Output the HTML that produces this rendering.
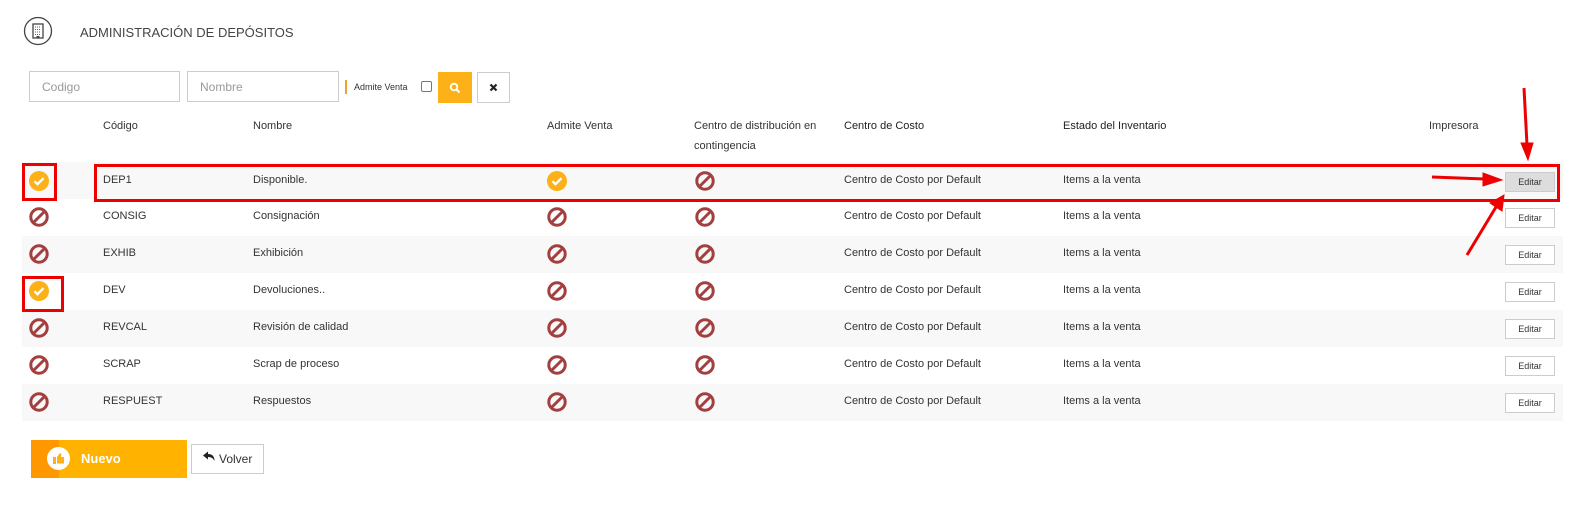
<!DOCTYPE html>
<html><head><meta charset="utf-8"><style>
*{margin:0;padding:0;box-sizing:border-box}
body{width:1593px;height:522px;background:#fff;font-family:"Liberation Sans","Noto Sans CJK JP",sans-serif;color:#333;position:relative;overflow:hidden}
.a{position:absolute}
.t{font-size:11px;color:#333;white-space:nowrap}
.row{position:absolute;left:22px;width:1541px;height:37px}
.g{background:#f8f8f8}
.inp{position:absolute;top:71px;height:31px;border:1px solid #ccc;font-size:12px;color:#999;padding:8px 12px;background:#fff}
.ed{position:absolute;left:1505px;width:50px;height:20px;border:1px solid #ccc;background:#fff;font-size:9px;text-align:center;line-height:18px;color:#333}
.rb{position:absolute;border:3px solid #ee0000}
</style></head><body>
<svg class="a" style="left:23px;top:16px" width="30" height="30" viewBox="0 0 30 30"><circle cx="15" cy="15" r="13.5" fill="none" stroke="#444" stroke-width="1.3"/><rect x="10" y="8" width="10" height="14" fill="none" stroke="#444" stroke-width="1.3"/><path d="M12 11h6M12 13.5h6M12 16h6M12 18.5h6" stroke="#666" stroke-width="1" stroke-dasharray="1 1"/><rect x="13.5" y="20" width="3" height="2" fill="#444"/></svg>
<div class="a" style="left:80px;top:25px;font-size:13px;color:#444">ADMINISTRACIÓN DE DEPÓSITOS</div>

<div class="inp" style="left:29px;width:151px">Codigo</div>
<div class="inp" style="left:187px;width:152px">Nombre</div>
<div class="a" style="left:345px;top:80px;width:2px;height:14px;background:#f0a030"></div>
<div class="a" style="left:354px;top:82px;font-size:9px;color:#333">Admite Venta</div>
<div class="a" style="left:421px;top:81px;width:11px;height:11px;border:1px solid #777;border-radius:2px"></div>
<div class="a" style="left:438px;top:72px;width:34px;height:31px;background:#fbb117"></div>
<svg class="a" style="left:449px;top:82px" width="12" height="12" viewBox="0 0 12 12"><circle cx="5" cy="5" r="3.3" fill="none" stroke="#fff" stroke-width="1.8"/><path d="M7.5 7.5L10.5 10.5" stroke="#fff" stroke-width="2"/></svg>
<div class="a" style="left:477px;top:72px;width:33px;height:31px;border:1px solid #ccc;background:#fff"></div>
<svg class="a" style="left:489px;top:83px" width="9" height="9" viewBox="0 0 9 9"><path d="M1.5 1.5L7.5 7.5M7.5 1.5L1.5 7.5" stroke="#222" stroke-width="2.2"/></svg>

<div class="a t" style="left:103px;top:120px">Código</div>
<div class="a t" style="left:253px;top:120px">Nombre</div>
<div class="a t" style="left:547px;top:120px">Admite Venta</div>
<div class="a t" style="left:694px;top:116px;line-height:20px">Centro de distribución en<br>contingencia</div>
<div class="a t" style="left:844px;top:120px;color:#222">Centro de Costo</div>
<div class="a t" style="left:1063px;top:120px;color:#222">Estado del Inventario</div>
<div class="a t" style="left:1429px;top:120px">Impresora</div>

<div class="row g" style="top:162px"></div>
<div class="row" style="top:199px"></div>
<div class="row g" style="top:236px"></div>
<div class="row" style="top:273px"></div>
<div class="row g" style="top:310px"></div>
<div class="row" style="top:347px"></div>
<div class="row g" style="top:384px"></div>

<svg width="0" height="0" style="position:absolute"><defs>
<symbol id="ok" viewBox="0 0 20 20"><circle cx="10" cy="10" r="10" fill="#fbb117"/><path d="M5.5 10.2l3 3 6-6" fill="none" stroke="#fff" stroke-width="2.4"/></symbol>
<symbol id="no" viewBox="0 0 20 20"><circle cx="10" cy="10" r="8.2" fill="none" stroke="#a3403f" stroke-width="3"/><path d="M4.5 15.5L15.5 4.5" stroke="#a3403f" stroke-width="3"/></symbol>
</defs></svg>

<svg class="a" style="left:29px;top:171px" width="20" height="20"><use href="#ok"/></svg>
<svg class="a" style="left:547px;top:171px" width="20" height="20"><use href="#ok"/></svg>
<svg class="a" style="left:695px;top:171px" width="20" height="20"><use href="#no"/></svg>
<div class="a t" style="left:103px;top:174px">DEP1</div><div class="a t" style="left:253px;top:174px">Disponible.</div>
<div class="a t" style="left:844px;top:174px">Centro de Costo por Default</div><div class="a t" style="left:1063px;top:174px">Items a la venta</div>
<div class="ed" style="top:172px;background:#ddd">Editar</div>

<svg class="a" style="left:29px;top:207px" width="20" height="20"><use href="#no"/></svg>
<svg class="a" style="left:547px;top:207px" width="20" height="20"><use href="#no"/></svg>
<svg class="a" style="left:695px;top:207px" width="20" height="20"><use href="#no"/></svg>
<div class="a t" style="left:103px;top:210px">CONSIG</div><div class="a t" style="left:253px;top:210px">Consignación</div>
<div class="a t" style="left:844px;top:210px">Centro de Costo por Default</div><div class="a t" style="left:1063px;top:210px">Items a la venta</div>
<div class="ed" style="top:208px">Editar</div>

<svg class="a" style="left:29px;top:244px" width="20" height="20"><use href="#no"/></svg>
<svg class="a" style="left:547px;top:244px" width="20" height="20"><use href="#no"/></svg>
<svg class="a" style="left:695px;top:244px" width="20" height="20"><use href="#no"/></svg>
<div class="a t" style="left:103px;top:247px">EXHIB</div><div class="a t" style="left:253px;top:247px">Exhibición</div>
<div class="a t" style="left:844px;top:247px">Centro de Costo por Default</div><div class="a t" style="left:1063px;top:247px">Items a la venta</div>
<div class="ed" style="top:245px">Editar</div>

<svg class="a" style="left:29px;top:281px" width="20" height="20"><use href="#ok"/></svg>
<svg class="a" style="left:547px;top:281px" width="20" height="20"><use href="#no"/></svg>
<svg class="a" style="left:695px;top:281px" width="20" height="20"><use href="#no"/></svg>
<div class="a t" style="left:103px;top:284px">DEV</div><div class="a t" style="left:253px;top:284px">Devoluciones..</div>
<div class="a t" style="left:844px;top:284px">Centro de Costo por Default</div><div class="a t" style="left:1063px;top:284px">Items a la venta</div>
<div class="ed" style="top:282px">Editar</div>

<svg class="a" style="left:29px;top:318px" width="20" height="20"><use href="#no"/></svg>
<svg class="a" style="left:547px;top:318px" width="20" height="20"><use href="#no"/></svg>
<svg class="a" style="left:695px;top:318px" width="20" height="20"><use href="#no"/></svg>
<div class="a t" style="left:103px;top:321px">REVCAL</div><div class="a t" style="left:253px;top:321px">Revisión de calidad</div>
<div class="a t" style="left:844px;top:321px">Centro de Costo por Default</div><div class="a t" style="left:1063px;top:321px">Items a la venta</div>
<div class="ed" style="top:319px">Editar</div>

<svg class="a" style="left:29px;top:355px" width="20" height="20"><use href="#no"/></svg>
<svg class="a" style="left:547px;top:355px" width="20" height="20"><use href="#no"/></svg>
<svg class="a" style="left:695px;top:355px" width="20" height="20"><use href="#no"/></svg>
<div class="a t" style="left:103px;top:358px">SCRAP</div><div class="a t" style="left:253px;top:358px">Scrap de proceso</div>
<div class="a t" style="left:844px;top:358px">Centro de Costo por Default</div><div class="a t" style="left:1063px;top:358px">Items a la venta</div>
<div class="ed" style="top:356px">Editar</div>

<svg class="a" style="left:29px;top:392px" width="20" height="20"><use href="#no"/></svg>
<svg class="a" style="left:547px;top:392px" width="20" height="20"><use href="#no"/></svg>
<svg class="a" style="left:695px;top:392px" width="20" height="20"><use href="#no"/></svg>
<div class="a t" style="left:103px;top:395px">RESPUEST</div><div class="a t" style="left:253px;top:395px">Respuestos</div>
<div class="a t" style="left:844px;top:395px">Centro de Costo por Default</div><div class="a t" style="left:1063px;top:395px">Items a la venta</div>
<div class="ed" style="top:393px">Editar</div>

<div class="rb" style="left:22px;top:163px;width:35px;height:38px"></div>
<div class="rb" style="left:94px;top:164px;width:1466px;height:38px"></div>
<div class="rb" style="left:22px;top:276px;width:42px;height:36px"></div>
<svg class="a" style="left:0;top:0" width="1593" height="522"><g stroke="#ee0000" stroke-width="3" fill="#ee0000">
<path d="M1524 88L1527 145"/><path d="M1521 143L1533 143L1528 160Z" stroke-width="1"/>
<path d="M1432 177L1485 179"/><path d="M1483 173L1502 180L1483 186Z" stroke-width="1"/>
<path d="M1467 255L1496 207"/><path d="M1490 203L1504 195L1502 211Z" stroke-width="1"/>
</g></svg>

<div class="a" style="left:31px;top:440px;width:156px;height:38px;background:#ffb300"></div>
<div class="a" style="left:31px;top:440px;width:28px;height:38px;background:#ff9800"></div>
<div class="a" style="left:47px;top:447px;width:23px;height:23px;border-radius:50%;background:#fff"></div>
<svg class="a" style="left:52px;top:452px" width="13" height="13" viewBox="0 0 13 13"><rect x="1" y="5" width="3" height="7" fill="#fbb117"/><path d="M5 5L8 1C9.5 1 9.5 3 9 5H12V11.5H5Z" fill="#fbb117"/></svg>
<div class="a" style="left:81px;top:451px;font-size:13px;font-weight:bold;color:#fff">Nuevo</div>
<div class="a" style="left:191px;top:444px;width:73px;height:30px;border:1px solid #ccc;background:#fff;font-size:12px;color:#333;padding:7px 0 0 27px">Volver</div>
<svg class="a" style="left:203px;top:451px" width="12" height="11" viewBox="0 0 12 11"><path d="M0 4.5L5 0.5V3C9 3 11.5 5 11.5 10C10 7 8 6 5 6V8.5Z" fill="#222"/></svg>
</body></html>
